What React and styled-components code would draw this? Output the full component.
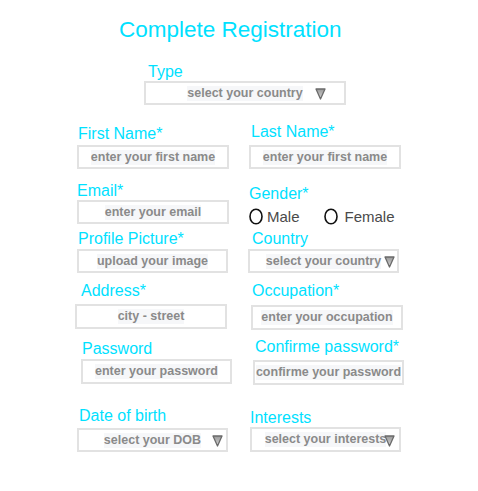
import React from 'react';
import styled, { createGlobalStyle } from 'styled-components';

const GlobalStyle = createGlobalStyle`
  body {
    margin: 0;
    background: #ffffff;
    font-family: 'Liberation Sans', Arial, sans-serif;
  }
`;

const StyledPage = styled.div`
  width: 478px;
  height: 491px;
  padding-top: 17px;
  box-sizing: border-box;
  overflow: hidden;
`;

const StyledTitle = styled.h1`
  margin: 0 0 0 119px;
  font-size: 22.5px;
  line-height: 26px;
  font-weight: normal;
  color: #00e1ff;
  white-space: nowrap;
`;

const StyledTypeRow = styled.div`
  height: 60px;
  margin-top: 20px;
  padding-left: 144px;
`;

const StyledRow = styled.div`
  display: grid;
  grid-template-columns: 172px 172px;
  height: ${({ h }) => h}px;
  padding-left: 75px;
`;

const StyledField = styled.div`
  display: flex;
  flex-direction: column;
  align-items: flex-start;
  padding-top: ${({ top }) => top}px;
`;

const StyledLabel = styled.label`
  margin-left: ${({ x }) => x}px;
  font-size: 16px;
  line-height: 18px;
  color: #00e1ff;
  white-space: nowrap;
`;

const StyledBox = styled.div`
  position: relative;
  display: flex;
  align-items: center;
  justify-content: center;
  margin-left: ${({ x }) => x}px;
  margin-top: ${({ gap }) => gap}px;
  width: ${({ w }) => w}px;
  height: ${({ h }) => h}px;
  box-sizing: border-box;
  border: 2px solid #e2e2e2;
  background: #ffffff;
`;

const StyledPlaceholder = styled.span`
  font-size: 12.5px;
  line-height: 15px;
  font-weight: bold;
  color: #8a8a8a;
  background: #f6f7f9;
  white-space: nowrap;
`;

const StyledArrow = styled.svg`
  position: absolute;
  right: ${({ r }) => r}px;
  top: calc(50% - 5px);
`;

const StyledRadioGroup = styled.div`
  display: flex;
  align-items: center;
  height: 18px;
  margin-top: 4px;
  margin-left: 2px;
`;

const StyledRadio = styled.span`
  display: inline-flex;
  align-items: center;
  margin-left: ${({ x }) => x}px;
  font-size: 15px;
  color: #4a4a4a;
`;

const Arrow = ({ r }) => (
  <StyledArrow r={r} width="11" height="12" viewBox="0 0 11 12">
    <defs>
      <linearGradient id="arrowFill" x1="0" y1="0" x2="0" y2="1">
        <stop offset="0" stopColor="#9a9a9a" />
        <stop offset="1" stopColor="#d4d4d4" />
      </linearGradient>
    </defs>
    <polygon
      points="1,1 10,1 5.5,11"
      fill="url(#arrowFill)"
      stroke="#6a6a6a"
      strokeWidth="1.3"
      strokeLinejoin="round"
    />
  </StyledArrow>
);

const Circle = () => (
  <svg width="14" height="17" viewBox="0 0 14 17">
    <ellipse cx="7" cy="8.5" rx="6" ry="7.3" fill="none" stroke="#111" strokeWidth="1.6" />
  </svg>
);

const Field = ({ label, text, lx, lt, bx, gap, w, h, arrow }) => (
  <StyledField top={lt}>
    <StyledLabel x={lx}>{label}</StyledLabel>
    <StyledBox x={bx} gap={gap} w={w} h={h}>
      <StyledPlaceholder>{text}</StyledPlaceholder>
      {arrow !== undefined && <Arrow r={arrow} />}
    </StyledBox>
  </StyledField>
);

const rows = [
  {
    h: 59,
    fields: [
      { label: 'First Name*', text: 'enter your first name', lx: 3, lt: 2, bx: 2, gap: 2, w: 152, h: 24 },
      { label: 'Last Name*', text: 'enter your first name', lx: 4, lt: 0, bx: 2, gap: 4, w: 152, h: 24 },
    ],
  },
  {
    h: 48,
    fields: [
      { label: 'Email*', text: 'enter your email', lx: 2, lt: 0, bx: 2, gap: 0, w: 152, h: 24 },
      { gender: true },
    ],
  },
  {
    h: 52,
    fields: [
      { label: 'Profile Picture*', text: 'upload your image', lx: 3, lt: 0, bx: 2, gap: 1, w: 151, h: 24 },
      { label: 'Country', text: 'select your country', lx: 5, lt: 0, bx: 1, gap: 1, w: 151, h: 24, arrow: 2 },
    ],
  },
  {
    h: 56,
    fields: [
      { label: 'Address*', text: 'city - street', lx: 6, lt: 0, bx: 0, gap: 4, w: 152, h: 25 },
      { label: 'Occupation*', text: 'enter your occupation', lx: 5, lt: 0, bx: 4, gap: 5, w: 152, h: 25 },
    ],
  },
  {
    h: 69,
    fields: [
      { label: 'Password', text: 'enter your password', lx: 7, lt: 2, bx: 6, gap: 1, w: 151, h: 25 },
      { label: 'Confirme password*', text: 'confirme your password', lx: 8, lt: 0, bx: 6, gap: 4, w: 151, h: 25 },
    ],
  },
  {
    h: 50,
    fields: [
      { label: 'Date of birth', text: 'select your DOB', lx: 4, lt: 0, bx: 2, gap: 3, w: 151, h: 24, arrow: 3 },
      { label: 'Interests', text: 'select your interests', lx: 3, lt: 2, bx: 3, gap: 0, w: 151, h: 25, arrow: 4 },
    ],
  },
];

const Gender = () => (
  <StyledField top={3}>
    <StyledLabel x={2}>Gender*</StyledLabel>
    <StyledRadioGroup>
      <Circle />
      <StyledRadio x={4}>Male</StyledRadio>
      <StyledRadio x={24}>
        <Circle />
      </StyledRadio>
      <StyledRadio x={7}>Female</StyledRadio>
    </StyledRadioGroup>
  </StyledField>
);

const App = () => (
  <>
    <GlobalStyle />
    <StyledPage>
      <StyledTitle>Complete Registration</StyledTitle>
      <StyledTypeRow>
        <Field label="Type" text="select your country" lx={4} lt={0} bx={0} gap={0} w={202} h={24} arrow={18} />
      </StyledTypeRow>
      {rows.map((row, i) => (
        <StyledRow key={i} h={row.h}>
          {row.fields.map((f, j) => (f.gender ? <Gender key={j} /> : <Field key={j} {...f} />))}
        </StyledRow>
      ))}
    </StyledPage>
  </>
);

export default App;
